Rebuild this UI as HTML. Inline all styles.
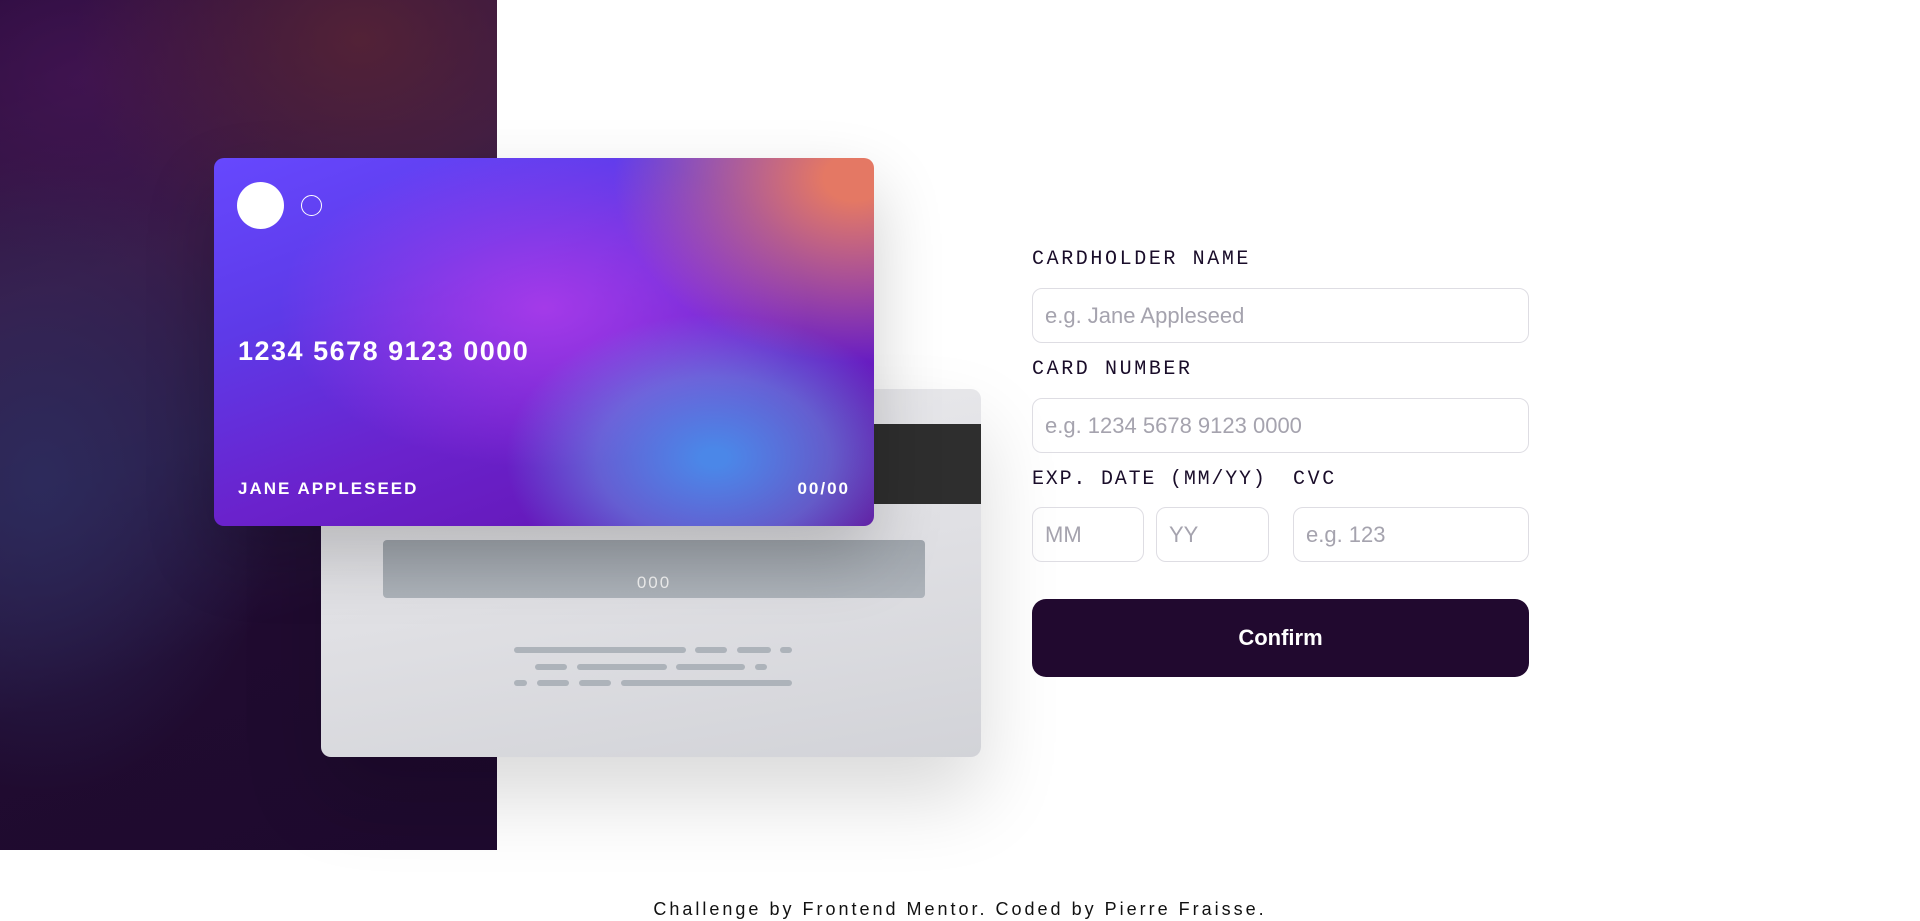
<!DOCTYPE html>
<html><head><meta charset="utf-8"><style>
*{margin:0;padding:0;box-sizing:border-box}
body{width:1920px;height:921px;background:#fff;position:relative;overflow:hidden;font-family:"Liberation Sans",sans-serif}
.left{position:absolute;left:0;top:0;width:497px;height:850px;
background:
radial-gradient(ellipse 380px 300px at 360px 40px,rgba(88,36,52,.85),transparent 75%),
radial-gradient(ellipse 320px 420px at 40px 480px,rgba(45,45,95,.85),transparent 75%),
radial-gradient(ellipse 300px 240px at 80px 80px,rgba(70,20,85,.7),transparent 75%),
linear-gradient(160deg,#2a0c3e 0%,#3a1c4a 30%,#2b1c48 50%,#200b30 70%,#1e0a2e 100%)}
.back{position:absolute;left:321px;top:389px;width:660px;height:368px;border-radius:10px;
background:linear-gradient(170deg,#ebebee 0%,#e0e0e4 50%,#d2d3d8 100%);box-shadow:0 40px 80px rgba(0,0,0,.15)}
.stripe{position:absolute;left:0;right:0;top:35px;height:80px;background:#2e2e2e}
.cvcbar{position:absolute;left:62px;top:151px;width:542px;height:58px;border-radius:4px;background:linear-gradient(#a0a6ad,#adb3ba)}
.cvcbar span{position:absolute;left:0;right:0;top:33px;text-align:center;color:#f2f2f2;font-size:17px;letter-spacing:2px}
.ln{position:absolute;height:6px;border-radius:3px;background:#adb3ba}
.front{position:absolute;left:214px;top:158px;width:660px;height:368px;border-radius:10px;overflow:hidden;
background:
radial-gradient(ellipse 300px 230px at 640px 20px,rgba(228,120,100,1) 10%,rgba(228,120,100,.5) 45%,transparent 80%),
radial-gradient(ellipse 260px 180px at 500px 300px,rgba(75,135,232,1) 5%,rgba(100,140,225,.6) 45%,transparent 80%),
radial-gradient(ellipse 330px 200px at 330px 150px,rgba(175,60,235,.85),transparent 80%),
radial-gradient(ellipse 220px 200px at 660px 360px,rgba(98,16,155,1),transparent 80%),
linear-gradient(160deg,#6648fe 0%,#5e3ae8 30%,#6a22cc 60%,#6212ac 100%);
box-shadow:0 30px 70px rgba(0,0,0,.2)}
.c1{position:absolute;left:23px;top:24px;width:47px;height:47px;border-radius:50%;background:#fff}
.c2{position:absolute;left:87px;top:37px;width:21px;height:21px;border-radius:50%;border:1px solid #fff}
.num{position:absolute;left:24px;color:#fff;font-size:27px;letter-spacing:1.5px;font-weight:bold}
.fr{position:absolute;color:#fff;font-size:17px;letter-spacing:2px;font-weight:bold}
label{position:absolute;font-family:"Liberation Mono",monospace;font-size:20px;letter-spacing:2.6px;color:#1a0d2a}
.in{position:absolute;height:55px;border:1px solid #dedde3;border-radius:10px;color:#a5a3ae;font-size:22px;padding-left:12px;line-height:53px}
.btn{position:absolute;left:1032px;top:599px;width:497px;height:78px;border-radius:14px;background:#21092f;color:#fff;font-size:22px;font-weight:bold;text-align:center;line-height:78px}
.foot{position:absolute;left:0;width:1920px;text-align:center;top:899px;font-size:18px;letter-spacing:3px;color:#111}
</style></head><body>
<div class="left"></div>
<div class="back">
<div class="stripe"></div>
<div class="cvcbar"><span>000</span></div>
<div class="ln" style="left:193px;top:258px;width:172px"></div>
<div class="ln" style="left:374px;top:258px;width:32px"></div>
<div class="ln" style="left:416px;top:258px;width:34px"></div>
<div class="ln" style="left:459px;top:258px;width:12px"></div>
<div class="ln" style="left:214px;top:275px;width:32px"></div>
<div class="ln" style="left:256px;top:275px;width:90px"></div>
<div class="ln" style="left:355px;top:275px;width:69px"></div>
<div class="ln" style="left:434px;top:275px;width:12px"></div>
<div class="ln" style="left:193px;top:291px;width:13px"></div>
<div class="ln" style="left:216px;top:291px;width:32px"></div>
<div class="ln" style="left:258px;top:291px;width:32px"></div>
<div class="ln" style="left:300px;top:291px;width:171px"></div>
</div>
<div class="front">
<div class="c1"></div><div class="c2"></div>
<div class="num" style="top:178px">1234 5678 9123 0000</div>
<div class="fr" style="left:24px;top:321px">JANE APPLESEED</div>
<div class="fr" style="right:24px;top:321px">00/00</div>
</div>
<label style="left:1032px;top:248px">CARDHOLDER NAME</label>
<div class="in" style="left:1032px;top:288px;width:497px">e.g. Jane Appleseed</div>
<label style="left:1032px;top:358px">CARD NUMBER</label>
<div class="in" style="left:1032px;top:398px;width:497px">e.g. 1234 5678 9123 0000</div>
<label style="left:1032px;top:468px;letter-spacing:1.8px">EXP. DATE (MM/YY)</label>
<label style="left:1293px;top:468px">CVC</label>
<div class="in" style="left:1032px;top:507px;width:112px">MM</div>
<div class="in" style="left:1156px;top:507px;width:113px">YY</div>
<div class="in" style="left:1293px;top:507px;width:236px">e.g. 123</div>
<div class="btn">Confirm</div>
<div class="foot">Challenge by Frontend Mentor. Coded by Pierre Fraisse.</div>
</body></html>
